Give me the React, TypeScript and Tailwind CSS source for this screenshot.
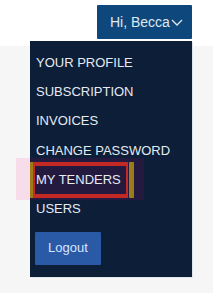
const ITEMS = ['YOUR PROFILE', 'SUBSCRIPTION', 'INVOICES', 'CHANGE PASSWORD', 'MY TENDERS', 'USERS'];

function Chevron() {
  return (
    <svg width="12" height="7" viewBox="0 0 12 7" fill="none" className="ml-[1px]">
      <polyline points="1,1 6,6 11,1" stroke="#dfe8f3" strokeWidth="1.3" />
    </svg>
  );
}

export default function App() {
  return (
    <div className="min-h-screen w-[213px] bg-[#f6f6f6] font-['Liberation_Sans',Arial,sans-serif]">
      {/* Header */}
      <div className="relative h-[46px] bg-white flex justify-end items-start pt-[5px] pr-[21px]">
        <button className="flex items-center h-[34px] w-[95px] pl-[13px] bg-[#0e477b] text-[#dfe8f3] text-[14px] rounded-[1px]">
          Hi, Becca
          <Chevron />
        </button>

        {/* Dropdown */}
        <div className="absolute top-[41px] right-[21px] w-[162px] h-[236px] bg-[#0c1e38] pt-[7px] pl-[6px] shadow-[1px_1px_0_#dfe6ee]">
          <ul>
            {ITEMS.map((item) => (
              <li key={item} className="relative h-[29.25px] flex items-center text-[13px] text-[#e6ebf2] tracking-[0px]">
                {item === 'MY TENDERS' && (
                  <>
                    <div className="absolute left-[-20px] top-[-7px] w-[128px] h-[42px] bg-[rgba(255,0,128,0.1)]" />
                    <div className="absolute left-[-6px] top-[-3px] w-[104px] h-[36px] border-l-[3px] border-r-[5px] border-[#9c7c17]" />
                    <div className="absolute left-[-3px] top-[-3px] w-[95px] h-[36px] border-x-[2px] border-y-[4px] border-[#c42a25]" />
                  </>
                )}
                <span className="relative">{item}</span>
              </li>
            ))}
          </ul>
          <button className="mt-[8px] ml-[-1px] w-[66px] h-[33px] bg-[#2a59a6] text-[#d6e5ff] text-[13px] rounded-[1px]">
            Logout
          </button>
        </div>
      </div>
    </div>
  );
}
